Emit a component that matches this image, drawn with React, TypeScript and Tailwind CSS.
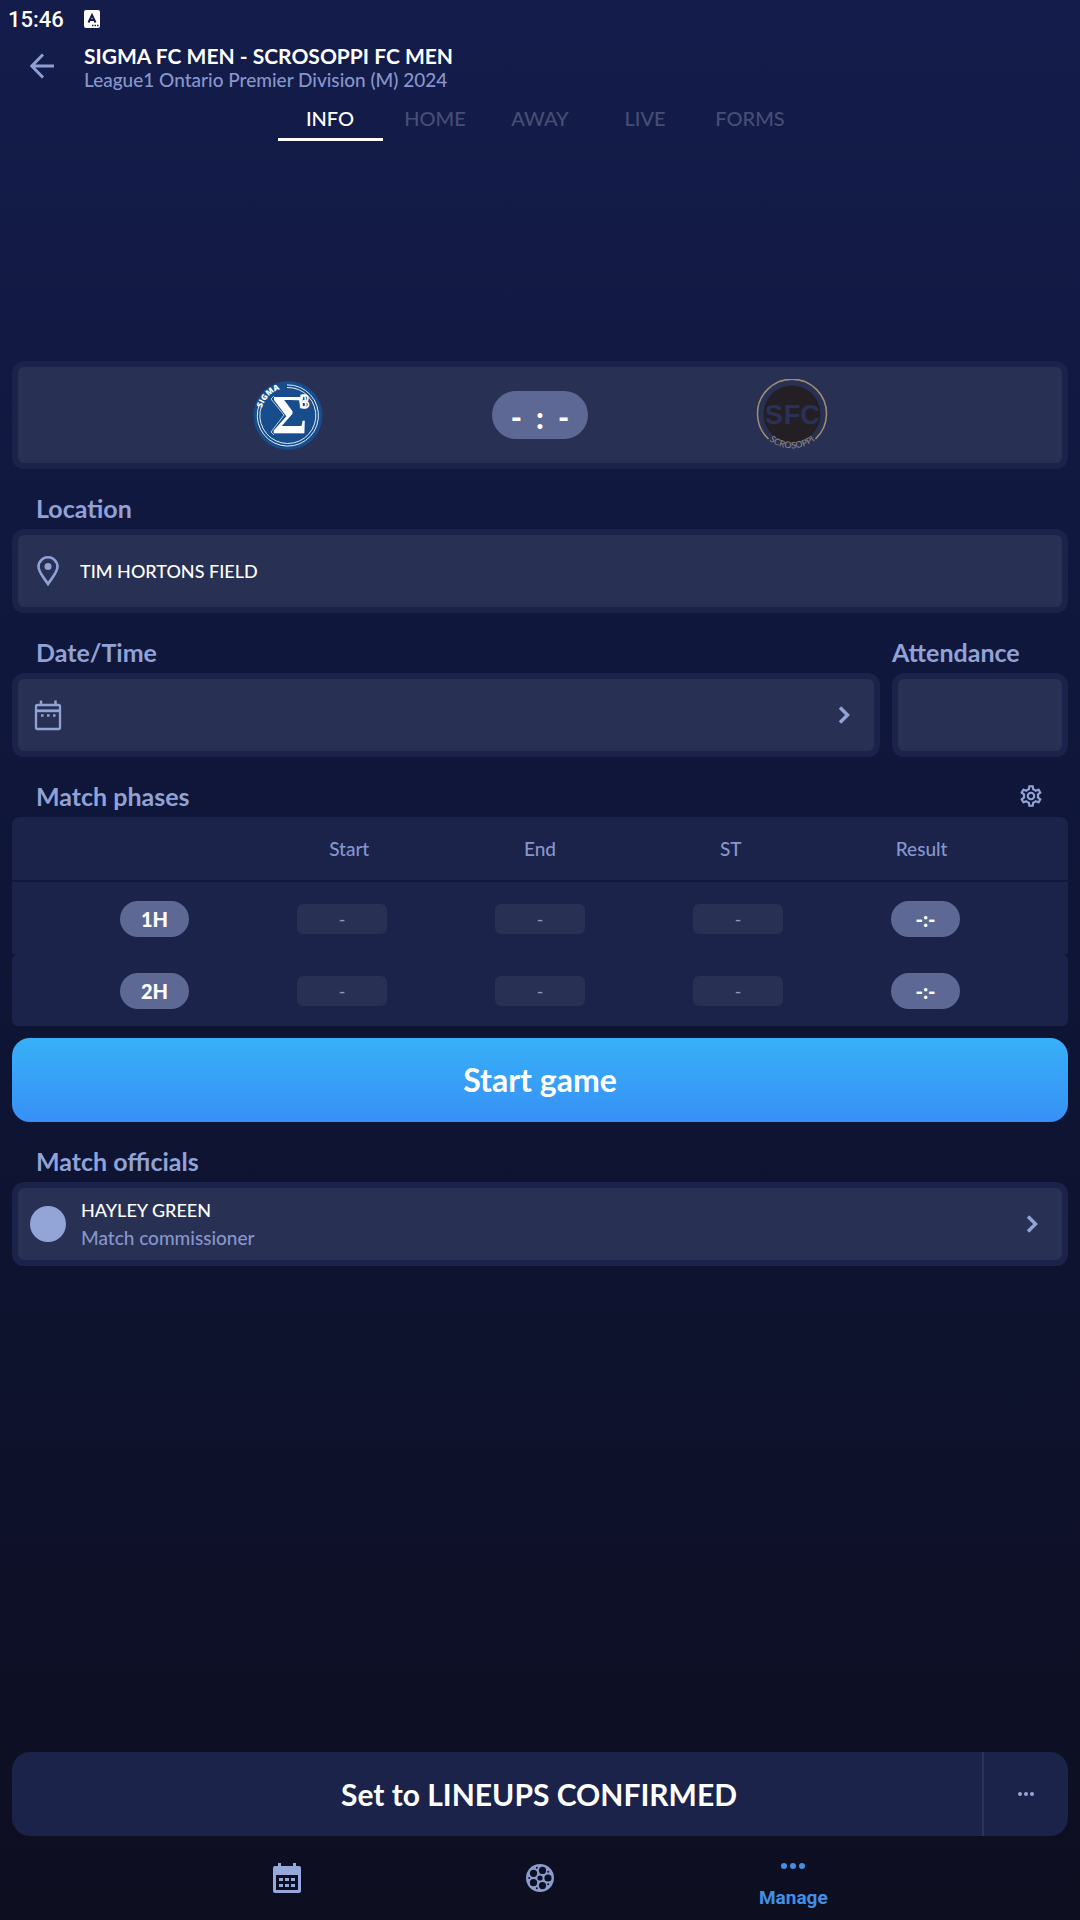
import type { ReactNode } from "react";
import { MdOutlineSettings } from "react-icons/md";

const tabs = ["INFO", "HOME", "AWAY", "LIVE", "FORMS"];
const phases = ["1H", "2H"];

function StatusIcon() {
  return (
    <svg width="16" height="18" viewBox="0 0 16 18" aria-hidden="true">
      <rect width="16" height="18" rx="2" fill="#fff" />
      <path d="M4.500 12.500 L8 5 L11.500 12.500 M5.800 10 H10.200" fill="none" stroke="#141b4a" strokeWidth="2" />
      <path d="M8 15.500 h1.500 M10.500 15.500 h1.500 M13 15.500 h1.500" stroke="#141b4a" strokeWidth="1.500" />
    </svg>
  );
}

function ArrowIcon() {
  return (
    <svg width="24" height="26" viewBox="0 0 24 26" fill="none" stroke="#8e9fd6" strokeWidth="3" aria-hidden="true">
      <path d="M24 13 H2 M13 1.500 L1.800 13 L13 24.500" />
    </svg>
  );
}

function Chevron() {
  return (
    <svg width="12" height="18" viewBox="0 0 12 18" fill="none" stroke="#91a2d6" strokeWidth="3.500" aria-hidden="true">
      <path d="M2 1.500 L9.500 9 L2 16.500" />
    </svg>
  );
}

function PinIcon() {
  return (
    <svg width="24" height="30" viewBox="0 0 24 30" aria-hidden="true">
      <path d="M12 28 C9 23 2.500 16.500 2.500 10.800 A9.500 9.500 0 0 1 21.500 10.800 C21.500 16.500 15 23 12 28 Z" fill="none" stroke="#91a2d6" strokeWidth="2.600" />
      <circle cx="12" cy="10.500" r="3.500" fill="#91a2d6" />
    </svg>
  );
}

function DateIcon() {
  return (
    <svg width="28" height="32" viewBox="0 0 28 32" fill="none" stroke="#91a2d6" aria-hidden="true">
      <rect x="2" y="6" width="24" height="24" rx="1.500" strokeWidth="2.300" />
      <path d="M7 1.500 V6 M21.500 1.500 V6" strokeWidth="2.500" />
      <path d="M2 11.800 H26" strokeWidth="2.800" />
      <path d="M7 16.500 h2.500 M13 16.500 h2.500 M19 16.500 h2.500" strokeWidth="2.500" />
    </svg>
  );
}

function CalendarIcon() {
  return (
    <svg width="28" height="30" viewBox="0 0 28 30" fill="#97a8dc" aria-hidden="true">
      <rect x="5" y="0" width="3" height="6" />
      <rect x="20" y="0" width="3" height="6" />
      <path fillRule="evenodd" d="M2 3 H26 Q28 3 28 5 V28 Q28 30 26 30 H2 Q0 30 0 28 V5 Q0 3 2 3 Z M3 12 V27 H25 V12 Z" />
      <path d="M6 15 h4 v3 h-4 Z M12 15 h4 v3 h-4 Z M18 15 h4 v3 h-4 Z M6 21 h4 v3 h-4 Z M12 21 h4 v3 h-4 Z M18 21 h4 v3 h-4 Z" />
    </svg>
  );
}

function BallIcon() {
  return (
    <svg width="28" height="28" viewBox="0 0 28 28" aria-hidden="true">
      <circle cx="14" cy="14" r="14" fill="#8b9bcb" />
      <g fill="#0d1024">
        <circle cx="14" cy="14" r="2.600" />
        <circle cx="22" cy="14" r="3.600" />
        <circle cx="16.500" cy="6.400" r="3.600" />
        <circle cx="7.500" cy="9.300" r="3.600" />
        <circle cx="7.500" cy="18.700" r="3.600" />
        <circle cx="16.500" cy="21.600" r="3.600" />
        <circle cx="22.200" cy="7.800" r="1" />
        <circle cx="10.900" cy="3.800" r="1" />
        <circle cx="3.200" cy="14" r="1" />
        <circle cx="10.900" cy="24.200" r="1" />
        <circle cx="22.200" cy="20.200" r="1" />
      </g>
    </svg>
  );
}

function SigmaCrest() {
  return (
    <svg width="72" height="72" viewBox="0 0 72 72" role="img" aria-label="Sigma FC">
      <defs>
        <path id="sigma-arc" d="M9.500 31 A27 27 0 0 1 36 9" />
      </defs>
      <circle cx="36" cy="36.500" r="34.500" fill="#174d8c" />
      <g fill="none" stroke="#e4ecf6" strokeWidth="1">
        <path d="M35 5.900 A30.600 30.600 0 1 1 7.500 25" />
        <path d="M35 8.500 A28 28 0 1 1 9.500 27" />
        <path d="M22 17 L19 20 L32 36 L19 53 L22 56 M45 49 L41 50 L38 53" strokeOpacity="0.8" />
      </g>
      <text fill="#fff" fontFamily="Open Sans, sans-serif" fontWeight="800" fontSize="8">
        <textPath href="#sigma-arc" startOffset="2">SIGMA</textPath>
      </text>
      <text x="20" y="54" fill="#fff" fontFamily="Liberation Serif, serif" fontWeight="700" fontSize="54">Σ</text>
      <text x="48" y="29" fill="#174d8c" stroke="#fff" strokeWidth="1.500" fontFamily="Liberation Serif, serif" fontWeight="700" fontSize="18">3</text>
    </svg>
  );
}

function ScrosoppiCrest() {
  return (
    <svg width="72" height="72" viewBox="0 0 72 72" role="img" aria-label="Scrosoppi FC">
      <defs>
        <path id="scrosoppi-arc" d="M6 54 A37 37 0 0 0 66 54" />
      </defs>
      <path d="M12.500 60 A34.500 34.500 0 1 1 59.500 60" fill="none" stroke="#a28e73" strokeWidth="1.500" />
      <circle cx="36" cy="35" r="28.500" fill="#231f24" />
      <g fill="#2a3158" fontFamily="Liberation Sans, sans-serif" fontSize="27" fontWeight="700" textAnchor="middle">
        <text x="18" y="45">S</text>
        <text x="36" y="45">F</text>
        <text x="54" y="45">C</text>
      </g>
      <text fill="#958b80" fontFamily="Lato, sans-serif" fontSize="9" textAnchor="middle">
        <textPath href="#scrosoppi-arc" startOffset="50%">SCROSOPPI</textPath>
      </text>
    </svg>
  );
}

function Card({ children, className = "" }: { children?: ReactNode; className?: string }) {
  return (
    <div className={`rounded-xl bg-[#1b234a] p-1.5 ${className}`}>
      <div className="flex h-full items-center rounded-md bg-[#283054]">{children}</div>
    </div>
  );
}

function Dots({ large = false }: { large?: boolean }) {
  const dot = large ? "size-1.5 rounded-full bg-current" : "size-1 rounded-full bg-current";
  return (
    <span className={large ? "flex gap-[3px]" : "flex gap-0.5"} aria-hidden="true">
      <i className={dot} />
      <i className={dot} />
      <i className={dot} />
    </span>
  );
}

const heading = "flex h-15 items-center pt-5 text-[25px] font-bold text-[#91a2d6]";
const pill = "flex h-9 w-[69px] items-center justify-center rounded-full bg-[#5d6994] text-xl font-black text-white";

export default function App() {
  return (
    <div className="flex min-h-screen flex-col bg-linear-to-b from-[#141c4b] via-[#0e1536] to-[#0d0e20] font-[Lato,sans-serif] text-white">
      <div className="flex h-9 items-center gap-5 px-2 pt-0.5 font-[Roboto,sans-serif] text-[22px] font-medium">
        <span>15:46</span>
        <StatusIcon />
      </div>
      <header className="flex h-15 items-center">
        <button aria-label="Back" className="flex w-21 justify-center"><ArrowIcon /></button>
        <div className="pt-1">
          <h1 className="text-[21px] leading-6 font-bold">SIGMA FC MEN - SCROSOPPI FC MEN</h1>
          <p className="text-[19px] leading-6 font-medium text-[#8796cb]">League1 Ontario Premier Division (M) 2024</p>
        </div>
      </header>
      <nav className="flex justify-center">
        {tabs.map((t, i) => (
          <button key={t} className={i === 0 ? "h-[45px] w-[105px] border-b-3 border-white pt-0.5 text-xl font-medium" : "h-[45px] w-[105px] border-b-3 border-transparent pt-0.5 text-xl font-medium text-[#474e75]"}>{t}</button>
        ))}
      </nav>
      <main className="px-3 pt-55">
        <Card>
          <div className="grid h-24 w-full grid-cols-3 items-center justify-items-center px-36">
            <SigmaCrest />
            <div className="flex h-12 w-24 items-center justify-center gap-3.5 rounded-full bg-[#5d6994] pt-1 text-3xl font-black">
              <span>-</span><span>:</span><span>-</span>
            </div>
            <ScrosoppiCrest />
          </div>
        </Card>
        <h2 className={`${heading} px-6`}>Location</h2>
        <Card className="h-21">
          <div className="flex items-center gap-5 px-4.5"><PinIcon /><span className="text-lg font-medium">TIM HORTONS FIELD</span></div>
        </Card>
        <div className="flex gap-3">
          <section className="flex-1">
            <h2 className={`${heading} px-6`}>Date/Time</h2>
            <Card className="h-21">
              <button aria-label="Choose date and time" className="flex h-full w-full items-center justify-between pr-6 pl-4"><DateIcon /><Chevron /></button>
            </Card>
          </section>
          <section className="w-44">
            <label htmlFor="attendance" className={heading}>Attendance</label>
            <Card className="h-21"><input id="attendance" className="h-full w-full rounded-md bg-transparent px-4 text-[19px] outline-none" /></Card>
          </section>
        </div>
        <div className="flex items-center justify-between px-6">
          <h2 className={heading}>Match phases</h2>
          <button aria-label="Phase settings" className="pt-4.5 text-[#91a2d6]"><MdOutlineSettings size={26} /></button>
        </div>
        <table className="block w-full text-[#8796cb]">
          <thead className="block">
            <tr className="grid h-[65px] grid-cols-5 items-center rounded-t-lg border-b-2 border-[#10183c] bg-[#1b234a] px-[51px] pt-0.5 text-[19px]">
              <td />
              <th className="font-medium">Start</th>
              <th className="font-medium">End</th>
              <th className="font-medium">ST</th>
              <th className="font-medium">Result</th>
            </tr>
          </thead>
          <tbody className="block">
            {phases.map((p, i) => (
              <tr key={p} className={i === 0 ? "flex h-18 items-center justify-evenly bg-[#1b234a] pt-0.5" : "flex h-18 items-center justify-evenly rounded-md bg-[#1b234a] pt-0.5"}>
                <th className={pill}>{p}</th>
                {[0, 1, 2].map((n) => (
                  <td key={n}><button className="flex h-7.5 w-[90px] items-center justify-center rounded-md bg-[#283054] text-lg font-medium">-</button></td>
                ))}
                <td className={pill}>-:-</td>
              </tr>
            ))}
          </tbody>
        </table>
        <button className="mt-3 h-21 w-full rounded-[18px] bg-linear-to-b from-[#38b0f8] to-[#3790f6] text-[32px] font-bold">Start game</button>
        <h2 className={`${heading} px-6`}>Match officials</h2>
        <Card className="h-21">
          <button className="flex w-full items-center gap-[15px] pr-6 pl-3 text-left font-medium">
            <span className="size-9 rounded-full bg-[#93a5d7]" />
            <span className="flex-1"><span className="block text-lg leading-7">HAYLEY GREEN</span><span className="block text-[19px] leading-7 text-[#8796cb]">Match commissioner</span></span>
            <Chevron />
          </button>
        </Card>
      </main>
      <footer className="mt-auto">
        <div className="mx-3 flex h-21 rounded-[18px] bg-[#1b234a]">
          <button className="flex-1 pl-21 text-[30px] font-bold">Set to LINEUPS CONFIRMED</button>
          <button aria-label="More actions" className="flex w-[86px] items-center justify-center border-l-2 border-[#2b3359] text-[#97a5d8]"><Dots /></button>
        </div>
        <nav className="grid h-21 grid-cols-3 items-center justify-items-center px-40">
          <a href="#calendar" aria-label="Calendar"><CalendarIcon /></a>
          <a href="#matches" aria-label="Matches"><BallIcon /></a>
          <a href="#manage" className="flex flex-col items-center gap-[17px] self-end pb-2.5 font-[Roboto,sans-serif] text-[19px] leading-6 font-bold text-[#418fe6]"><Dots large />Manage</a>
        </nav>
      </footer>
    </div>
  );
}
